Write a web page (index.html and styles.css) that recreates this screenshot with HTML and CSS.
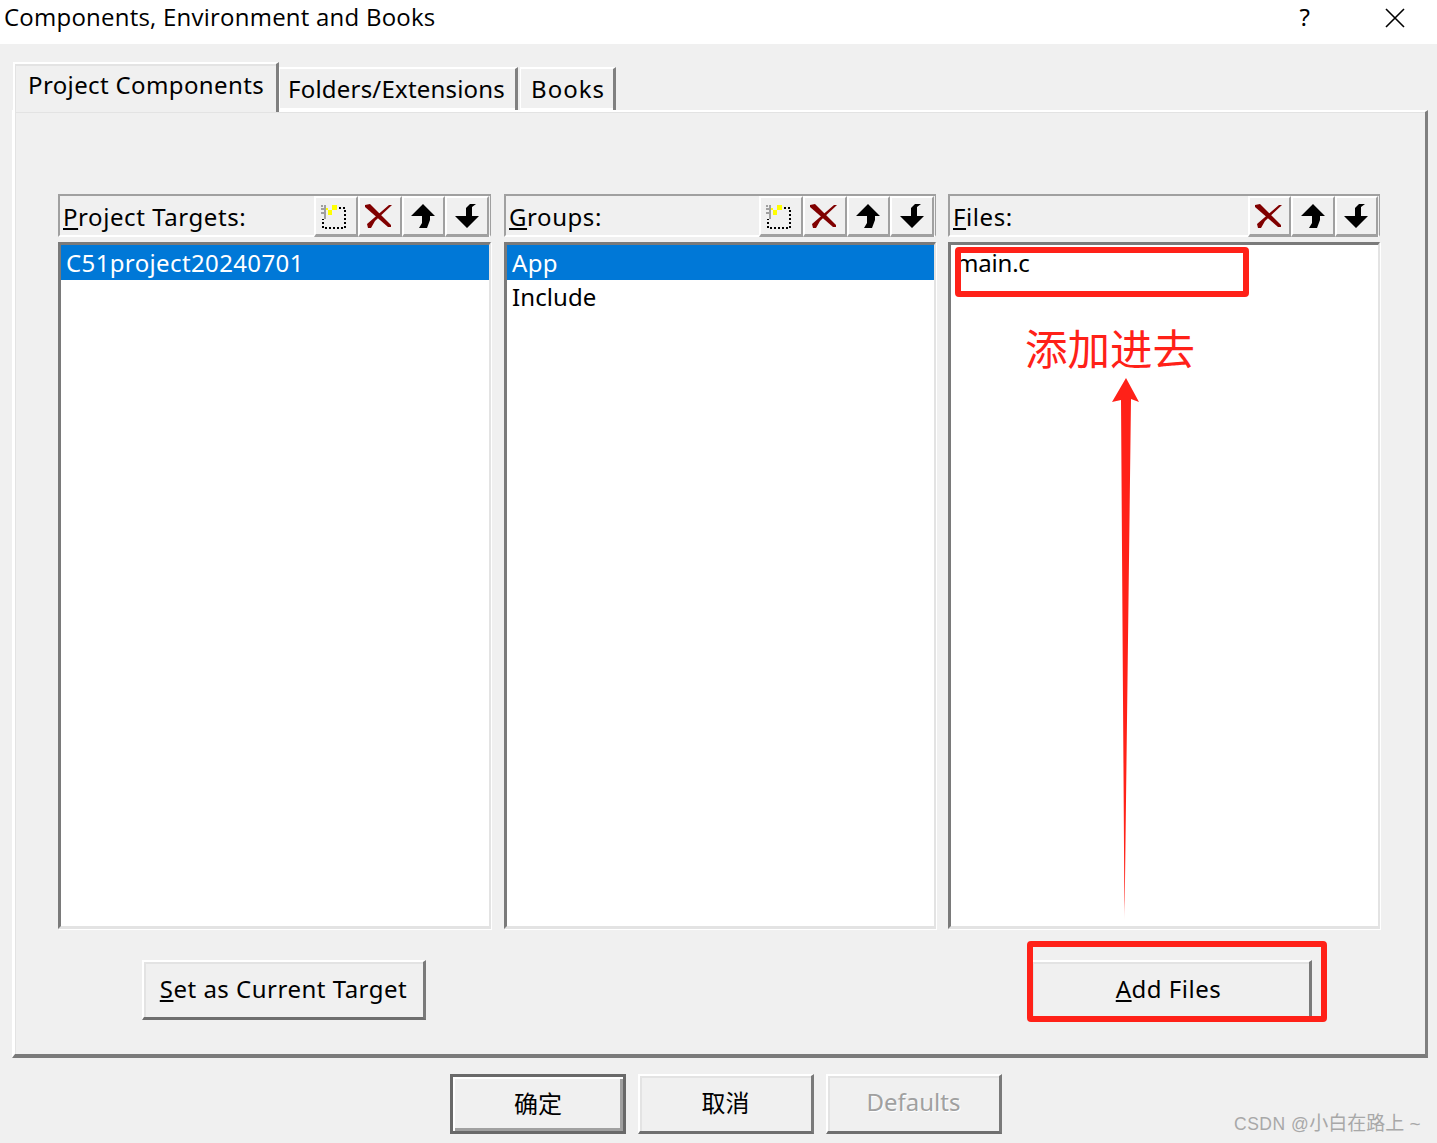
FILE: index.html
```html
<!DOCTYPE html>
<html lang="zh-CN">
<head>
    <meta charset="UTF-8">
    <title>Components, Environment and Books</title>
    <link rel="stylesheet" href="styles.css">
</head>
<body>
    <svg class="icon-defs" width="0" height="0">
        <symbol id="icon-new" viewBox="3 -3 30 30">
            <rect x="5" y="4" width="22" height="20" fill="none" stroke="#000" stroke-width="2" stroke-dasharray="2 2"/>
            <rect x="3" y="0" width="16" height="15" fill="#f0f0f0"/>
            <path d="M3 4h7v2H3zM6 1h2v14H6zM3 8h4v2H3zM3 1h2v2H3z" fill="#a0a0a0"/>
            <path d="M14 1h5v5h-5zM10 6h4v5h-4zM8 4h2v2H8z" fill="#ffff00"/>
        </symbol>
        <symbol id="icon-del" viewBox="0 0 27 24">
            <path d="M0 1L5 0 26 21 26 23 23 23 0 3z" fill="#800000"/>
            <path d="M24 1L27 1 10 17 6 24 3 24 2 20z" fill="#800000"/>
        </symbol>
        <symbol id="icon-up" viewBox="0 0 24 24">
            <path d="M12 0l12 12-5 0 0 4-3 8-8 0 3-5 0-7-11 0z" fill="#000"/>
        </symbol>
        <symbol id="icon-down" viewBox="0 0 24 24">
            <path d="M15 0l6 0-4 3 0 9 7 0-12 12-12-12 11 0 0-8z" fill="#000"/>
        </symbol>
    </svg>

    <div class="titlebar">
        <span class="title">Components, Environment and Books</span>
        <span class="help">?</span>
        <svg class="close" width="20" height="20" viewBox="0 0 20 20"><path d="M1 1l18 18M19 1L1 19" stroke="#000" stroke-width="1.6" fill="none"/></svg>
    </div>

    <div class="dialog">
        <div class="tabs">
            <div class="tab active">Project Components</div>
            <div class="tab tab-folders">Folders/Extensions</div>
            <div class="tab tab-books">Books</div>
        </div>

        <div class="page">
            <div class="columns">
                <div class="col col-first">
                    <div class="col-head">
                        <span class="label"><u>P</u>roject Targets:</span>
                        <div class="tools">
                            <button class="tool"><svg class="ico-new"><use href="#icon-new"/></svg></button>
                            <button class="tool"><svg class="ico-del"><use href="#icon-del"/></svg></button>
                            <button class="tool"><svg class="ico-arrow"><use href="#icon-up"/></svg></button>
                            <button class="tool"><svg class="ico-arrow"><use href="#icon-down"/></svg></button>
                        </div>
                    </div>
                    <div class="list">
                        <div class="item selected">C51project20240701</div>
                    </div>
                </div>
                <div class="col">
                    <div class="col-head">
                        <span class="label"><u>G</u>roups:</span>
                        <div class="tools">
                            <button class="tool"><svg class="ico-new"><use href="#icon-new"/></svg></button>
                            <button class="tool"><svg class="ico-del"><use href="#icon-del"/></svg></button>
                            <button class="tool"><svg class="ico-arrow"><use href="#icon-up"/></svg></button>
                            <button class="tool"><svg class="ico-arrow"><use href="#icon-down"/></svg></button>
                        </div>
                    </div>
                    <div class="list">
                        <div class="item selected">App</div>
                        <div class="item">Include</div>
                    </div>
                </div>
                <div class="col">
                    <div class="col-head">
                        <span class="label"><u>F</u>iles:</span>
                        <div class="tools tools-files">
                            <button class="tool"><svg class="ico-del"><use href="#icon-del"/></svg></button>
                            <button class="tool"><svg class="ico-arrow"><use href="#icon-up"/></svg></button>
                            <button class="tool"><svg class="ico-arrow"><use href="#icon-down"/></svg></button>
                        </div>
                    </div>
                    <div class="list list-files">
                        <div class="item">main.c</div>
                    </div>
                </div>
            </div>

            <div class="page-actions">
                <button class="btn btn-target"><u>S</u>et as Current Target</button>
                <button class="btn btn-add"><u>A</u>dd Files</button>
            </div>
        </div>

        <div class="dialog-actions">
            <button class="btn btn-default">确定</button>
            <button class="btn btn-wide">取消</button>
            <button class="btn btn-wide disabled">Defaults</button>
        </div>
    </div>

    <!-- red notes drawn on top of the screenshot -->
    <div class="mark mark-file"></div>
    <div class="mark mark-add"></div>
    <div class="note">添加进去</div>
    <svg class="note-arrow" width="30" height="544" viewBox="0 0 30 544">
        <defs>
            <linearGradient id="fade" x1="0" y1="0" x2="0" y2="1">
                <stop offset="0.96" stop-color="#ff2118"/>
                <stop offset="1" stop-color="#ff2118" stop-opacity="0"/>
            </linearGradient>
        </defs>
        <path d="M15 0L28 24 20 21 13.5 544 10 22 1 24z" fill="url(#fade)"/>
    </svg>
    <div class="watermark">CSDN @<span class="watermark-cjk">小白在路上 ~</span></div>
</body>
</html>
```

FILE: styles.css
```css
body {
    margin: 0;
    width: 1437px;
    height: 1143px;
    overflow: hidden;
    background: #f0f0f0;
    color: #000;
    font-family: "Noto Sans", "Noto Sans CJK SC", sans-serif;
    font-size: 24px;
}
.icon-defs {
    display: block;
    height: 0;
}

/* title bar */
.titlebar {
    display: flex;
    align-items: center;
    height: 44px;
    padding: 0 32px 8px 4px;
    box-sizing: border-box;
    background: #fff;
}
.title {
    flex: 1;
    margin-top: -3px;
    font-family: "Open Sans", sans-serif;
    font-size: 24px;
    letter-spacing: 0.23px;
}
.help {
    margin-right: 75px;
    margin-top: -4px;
    font-size: 24px;
}

/* tabs */
.dialog {
    padding: 18px 9px 0 12px;
}
.tabs {
    display: flex;
    align-items: flex-end;
    height: 48px;
    padding-left: 1px;
    position: relative;
    z-index: 1;
}
.tab {
    box-sizing: border-box;
    height: 43px;
    padding: 3px 8px 0 8px;
    border-top: 2px solid #fff;
    border-left: 1px solid #fff;
    border-right: 3px solid #808080;
    box-shadow: inset 0 -2px 0 #fff;
    font-size: 24px;
    line-height: 34px;
    white-space: nowrap;
    letter-spacing: 0.2px;
}
.tab-folders {
    padding-right: 10px;
}
.tab-books {
    margin-left: 2px;
    padding: 3px 8px 0 10px;
    letter-spacing: 1px;
}
.tab.active {
    height: 50px;
    margin-bottom: -2px;
    padding: 4px 12px 0 13px;
    border-left-width: 2px;
    background: #f0f0f0;
    box-shadow: inset 1px 2px 0 #e3e3e3;
    letter-spacing: 0.37px;
}

/* tab page */
.page {
    box-sizing: border-box;
    width: 1416px;
    height: 948px;
    padding: 82px 0 0 44px;
    border-top: 2px solid #fff;
    border-left: 3px solid #fff;
    border-right: 3px solid #808080;
    border-bottom: 4px solid #7a7a7a;
    box-shadow: inset 1px 1px 0 #e3e3e3;
}
.columns {
    display: grid;
    grid-template-columns: 434px 432px 432px;
    column-gap: 12px;
    margin-left: -1px;
}
.col-first {
    margin-right: 1px;
}
.col-head {
    display: flex;
    align-items: stretch;
    box-sizing: border-box;
    height: 43px;
    border-top: 2px solid #a0a0a0;
    border-left: 2px solid #a0a0a0;
    border-right: 1px solid #a0a0a0;
    border-bottom: 2px solid #fff;
}
.label {
    flex: 1;
    padding: 4px 0 0 3px;
    font-size: 24px;
    line-height: 34px;
    letter-spacing: 0.57px;
}
.tools {
    display: flex;
    margin-right: 1px;
}
.tools-files {
    margin-right: 1px;
}
.tool {
    display: flex;
    align-items: center;
    justify-content: center;
    box-sizing: border-box;
    width: 43.75px;
    height: 41px;
    padding: 0;
    background: #f0f0f0;
    border: 0;
    border-top: 2px solid #fff;
    border-left: 2px solid #fff;
    border-right: 2px solid #a0a0a0;
    border-bottom: 3px solid #a0a0a0;
}
.tools-files .tool {
    width: 43.33px;
}
.ico-new {
    width: 30px;
    height: 30px;
}
.ico-del {
    width: 27px;
    height: 24px;
    margin-right: 3px;
}
.ico-arrow {
    width: 24px;
    height: 24px;
}
.list {
    box-sizing: border-box;
    height: 687px;
    margin-top: 5px;
    background: #fff;
    border-top: 3px solid #7a7a7a;
    border-left: 3px solid #7a7a7a;
    border-right: 2px solid #e3e3e3;
    border-bottom: 3px solid #e3e3e3;
    box-shadow: 1px 1px 0 #fff;
}
.item {
    height: 35px;
    padding-left: 5px;
    font-size: 24px;
    line-height: 35px;
    letter-spacing: 0.37px;
}
.item + .item {
    margin-top: -1px;
    letter-spacing: 0.1px;
}
.list-files .item {
    letter-spacing: -0.2px;
}
.item.selected {
    background: #0078d7;
    color: #fff;
}

/* buttons */
.btn {
    box-sizing: border-box;
    padding: 0 0 2px;
    background: #f0f0f0;
    color: #000;
    border: 0;
    border-top: 2px solid #fff;
    border-left: 2px solid #fff;
    border-right: 3px solid #7a7a7a;
    border-bottom: 3px solid #6f6f6f;
    box-shadow: inset 2px 2px 0 #e3e3e3;
    font-family: "Noto Sans", "Noto Sans CJK SC", sans-serif;
    font-size: 24px;
    letter-spacing: 0.5px;
}
.page-actions {
    display: flex;
    justify-content: space-between;
    padding: 31px 113px 0 83px;
}
.btn-target {
    width: 284px;
    height: 60px;
}
.btn-add {
    width: 282px;
    height: 60px;
    padding-right: 4px;
}
.dialog-actions {
    display: flex;
    gap: 12px;
    padding: 16px 0 0 438px;
}
.btn-wide,
.btn-default {
    width: 176px;
    height: 60px;
    padding-bottom: 4px;
    letter-spacing: 0;
}
.btn-default {
    border: 3px solid #696969;
    box-shadow: inset 2px 2px 0 #fff, inset -3px -3px 0 #a0a0a0;
}
.btn.disabled {
    color: #a0a0a0;
    text-shadow: 1px 1px 0 #fff;
}

/* annotations */
.mark {
    position: absolute;
    box-sizing: border-box;
    border: 6px solid #ff2118;
    border-radius: 4px;
}
.mark-file {
    left: 955px;
    top: 247px;
    width: 294px;
    height: 50px;
}
.mark-add {
    left: 1027px;
    top: 941px;
    width: 300px;
    height: 81px;
}
.note {
    position: absolute;
    left: 1025px;
    top: 317px;
    color: #ff2118;
    font-family: "Noto Sans CJK SC", sans-serif;
    font-size: 42.5px;
    font-weight: 400;
    line-height: 60px;
}
.note-arrow {
    position: absolute;
    left: 1111px;
    top: 378px;
}
.close {
    display: block;
}
.watermark {
    position: absolute;
    left: 1234px;
    top: 1110px;
    color: #a8a8a8;
    font-family: "Liberation Sans", "Noto Sans CJK SC", sans-serif;
    font-size: 17.5px;
    letter-spacing: 0.5px;
    line-height: 28px;
    white-space: nowrap;
}
.watermark-cjk {
    font-size: 19px;
    letter-spacing: 0;
}
```
